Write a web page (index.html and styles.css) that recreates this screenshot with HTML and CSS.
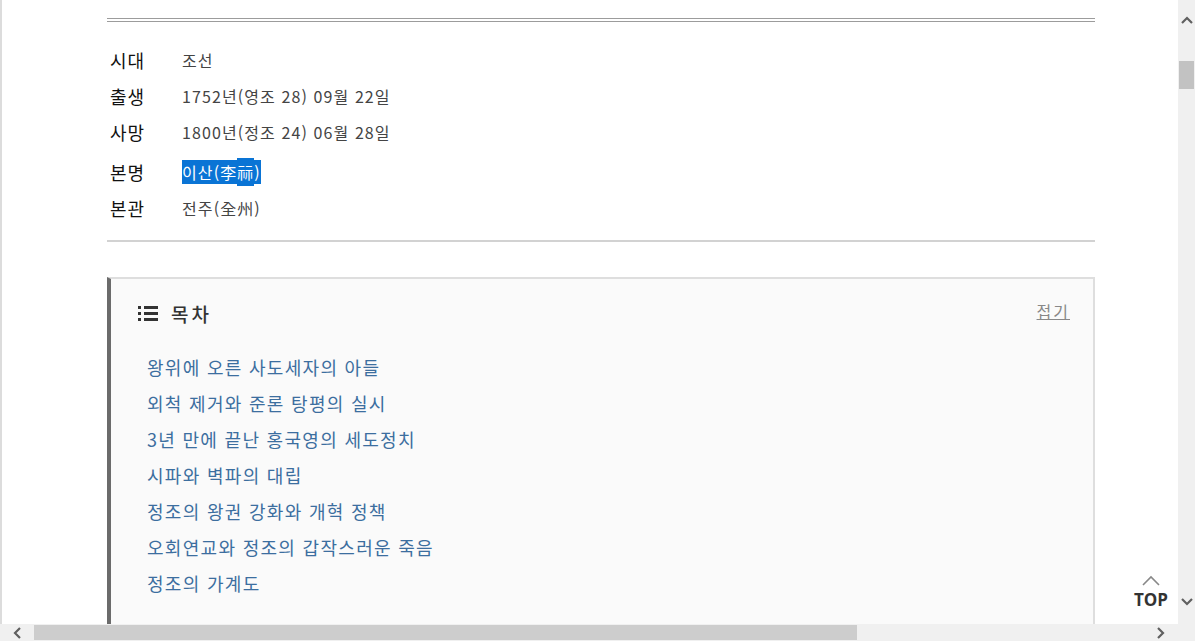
FILE: index.html
```html
<!DOCTYPE html>
<html lang="ko">
<head>
    <meta charset="UTF-8">
    <meta name="viewport" content="width=device-width, initial-scale=1.0">
    <title>정조</title>
    <link rel="stylesheet" href="styles.css">
</head>
<body>
<div class="viewport">

    <div class="page">
        <div class="content">
            <div class="title-rule"></div>

            <ul class="info">
                <li class="info-row"><span class="info-label">시대</span><span class="info-value">조선</span></li>
                <li class="info-row"><span class="info-label">출생</span><span class="info-value">1752년(영조 28) 09월 22일</span></li>
                <li class="info-row"><span class="info-label">사망</span><span class="info-value">1800년(정조 24) 06월 28일</span></li>
                <li class="info-row name-row"><span class="info-label">본명</span><span class="info-value"><span class="sel">이산(李<span class="sel-tall">祘</span>)</span></span></li>
                <li class="info-row"><span class="info-label">본관</span><span class="info-value">전주(全州)</span></li>
            </ul>

            <section class="toc">
                <div class="toc-head">
                    <h3 class="toc-title">
                        <svg class="toc-icon" width="20" height="15" viewBox="0 0 20 15">
                            <rect x="0" y="0" width="3" height="3" fill="#333"/>
                            <rect x="6" y="0" width="14" height="3" fill="#333"/>
                            <rect x="0" y="6" width="3" height="3" fill="#333"/>
                            <rect x="6" y="6" width="14" height="3" fill="#333"/>
                            <rect x="0" y="12" width="3" height="3" fill="#333"/>
                            <rect x="6" y="12" width="14" height="3" fill="#333"/>
                        </svg>
                        목차
                    </h3>
                    <a class="toc-fold" href="#">접기</a>
                </div>
                <ol class="toc-list">
                    <li><a href="#">왕위에 오른 사도세자의 아들</a></li>
                    <li><a href="#">외척 제거와 준론 탕평의 실시</a></li>
                    <li><a href="#">3년 만에 끝난 홍국영의 세도정치</a></li>
                    <li><a href="#">시파와 벽파의 대립</a></li>
                    <li><a href="#">정조의 왕권 강화와 개혁 정책</a></li>
                    <li><a href="#">오회연교와 정조의 갑작스러운 죽음</a></li>
                    <li><a href="#">정조의 가계도</a></li>
                </ol>
            </section>
        </div>

        <a class="top-btn" href="#">
            <svg width="18" height="11" viewBox="0 0 18 11"><path d="M1 10 L9 2 L17 10" fill="none" stroke="#888" stroke-width="1.6"/></svg>
            <span>TOP</span>
        </a>
    </div>

    <div class="vbar">
        <div class="vbar-btn up">
            <svg width="12" height="8" viewBox="0 0 12 8"><path d="M1 7 L6 2 L11 7" fill="none" stroke="#606060" stroke-width="2.2"/></svg>
        </div>
        <div class="vbar-track"><div class="vbar-thumb"></div></div>
        <div class="vbar-btn down">
            <svg width="12" height="8" viewBox="0 0 12 8"><path d="M1 1 L6 6 L11 1" fill="none" stroke="#606060" stroke-width="2.2"/></svg>
        </div>
    </div>

    <div class="hbar">
        <div class="hbar-btn">
            <svg width="8" height="12" viewBox="0 0 8 12"><path d="M7 1 L2 6 L7 11" fill="none" stroke="#606060" stroke-width="2.2"/></svg>
        </div>
        <div class="hbar-track"><div class="hbar-thumb"></div></div>
        <div class="hbar-btn">
            <svg width="8" height="12" viewBox="0 0 8 12"><path d="M1 1 L6 6 L1 11" fill="none" stroke="#606060" stroke-width="2.2"/></svg>
        </div>
    </div>

    <div class="corner"></div>
</div>
</body>
</html>
```

FILE: styles.css
```css
html, body {
    margin: 0;
    padding: 0;
    height: 100%;
    overflow: hidden;
}

body {
    font-family: "Noto Sans CJK KR", "Noto Sans", sans-serif;
    background-color: #fff;
    color: #333;
}

.viewport {
    display: grid;
    grid-template-columns: 1178px 17px;
    grid-template-rows: 624px 17px;
    width: 1195px;
    height: 641px;
}

.page {
    position: relative;
    overflow: hidden;
    border-left: 2px solid #dcdcdc;
}

.content {
    margin-left: 105px;
    width: 988px;
}

.title-rule {
    margin-top: 18px;
    height: 2px;
    border-top: 1px solid #9c9c9c;
    border-bottom: 1px solid #9c9c9c;
}

.info {
    list-style: none;
    margin: 0;
    padding: 20px 0 14px;
    border-bottom: 2px solid #d2d2d2;
}

.info-row {
    display: flex;
    height: 36px;
    align-items: center;
}

.name-row {
    margin-top: 4px;
}

.info-label {
    width: 72px;
    padding-left: 3px;
    font-size: 18px;
    font-weight: 400;
    letter-spacing: 1px;
    color: #111;
}

.info-value {
    font-size: 16px;
    color: #444;
    letter-spacing: 1.1px;
}

.sel {
    background: #0a74d5;
    color: #fff;
}

.sel-tall {
    padding: 2px 0;
    background: #0a74d5;
}

.toc {
    margin-top: 35px;
    background: #fafafa;
    border: 2px solid #dedede;
    border-left: 4px solid #6b6b6b;
    padding: 22px 25px 40px 27px;
}

.toc-head {
    display: flex;
    justify-content: space-between;
    align-items: center;
    height: 24px;
}

.toc-title {
    display: flex;
    align-items: center;
    gap: 13px;
    margin: 0;
    font-size: 19px;
    font-weight: 500;
    color: #333;
    letter-spacing: 3px;
}

.toc-fold {
    font-size: 16px;
    color: #888;
    letter-spacing: 2px;
    margin-right: -2px;
    text-decoration: underline;
    margin-top: -4px;
}

.toc-list {
    list-style: none;
    margin: 24px 0 0;
    padding: 0 0 0 9px;
}

.toc-list li {
    height: 36px;
    line-height: 36px;
    font-size: 18px;
    letter-spacing: 1.3px;
}

.toc-list a {
    color: #3c6e9f;
    text-decoration: none;
}

.top-btn {
    position: absolute;
    right: 0;
    bottom: 0;
    width: 82px;
    height: 52px;
    background: #fff;
    display: flex;
    flex-direction: column;
    align-items: center;
    padding-top: 3px;
    padding-left: 28px;
    box-sizing: border-box;
    text-decoration: none;
}

.top-btn span {
    font-family: "Open Sans", "Liberation Sans", sans-serif;
    font-weight: 700;
    font-size: 17px;
    color: #333;
    line-height: 18px;
    margin-top: 5px;
}

.vbar {
    background: #f0f0f0;
    display: flex;
    flex-direction: column;
}

.vbar-btn {
    display: flex;
    justify-content: center;
    align-items: center;
}

.vbar-btn.up {
    height: 40px;
}

.vbar-track {
    flex: 1;
    padding: 21px 1px 0;
}

.vbar-thumb {
    height: 28px;
    background: #c2c2c2;
}

.vbar-btn.down {
    height: 26px;
    align-items: flex-start;
}

.hbar {
    grid-column: 1;
    background: #f0f0f0;
    display: flex;
    align-items: stretch;
}

.hbar-btn {
    width: 34px;
    display: flex;
    justify-content: center;
    align-items: center;
}

.hbar-track {
    flex: 1;
    padding: 1px 0;
}

.hbar-thumb {
    width: 823px;
    height: 100%;
    background: #cdcdcd;
}

.corner {
    background: #f0f0f0;
}
```
